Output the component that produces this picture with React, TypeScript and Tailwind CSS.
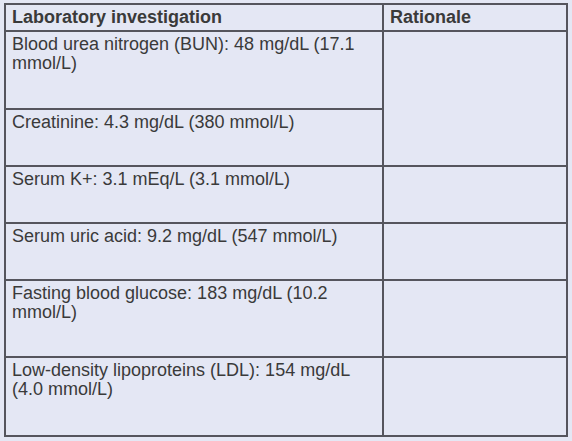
const rows = [
  { label: "Blood urea nitrogen (BUN): 48 mg/dL (17.1 mmol/L)", h: "h-[78px]", span: 2 },
  { label: "Creatinine: 4.3 mg/dL (380 mmol/L)", h: "h-[57px]", span: 0 },
  { label: "Serum K+: 3.1 mEq/L (3.1 mmol/L)", h: "h-[57px]", span: 1 },
  { label: "Serum uric acid: 9.2 mg/dL (547 mmol/L)", h: "h-[57px]", span: 1 },
  { label: "Fasting blood glucose: 183 mg/dL (10.2 mmol/L)", h: "h-[77px]", span: 1 },
  { label: "Low-density lipoproteins (LDL): 154 mg/dL (4.0 mmol/L)", h: "h-[79px]", span: 1 },
];

export default function App() {
  return (
    <div className="w-[572px] h-[441px] bg-[#e4e7f4] pt-[3px] pl-[4px] font-['Liberation_Sans',Arial,sans-serif] text-[18px] leading-[19px] text-[#3a3a3a]">
      <table className="border-collapse table-fixed w-[562px]">
        <colgroup>
          <col className="w-[378px]" />
          <col className="w-[184px]" />
        </colgroup>
        <thead>
          <tr>
            <th className="h-[27px] border-2 border-[#55555d] pl-[6px] pt-[3px] text-left align-top font-bold">
              Laboratory investigation
            </th>
            <th className="h-[27px] border-2 border-[#55555d] pl-[6px] pt-[3px] text-left align-top font-bold">
              Rationale
            </th>
          </tr>
        </thead>
        <tbody>
          {rows.map((r) => (
            <tr key={r.label}>
              <td className={`${r.h} border-2 border-[#55555d] pl-[6px] pr-[8px] pt-[3px] align-top`}>
                {r.label}
              </td>
              {r.span === 2 && (
                <td rowSpan={2} className="border-2 border-[#55555d]"></td>
              )}
              {r.span === 1 && <td className="border-2 border-[#55555d]"></td>}
            </tr>
          ))}
        </tbody>
      </table>
    </div>
  );
}
